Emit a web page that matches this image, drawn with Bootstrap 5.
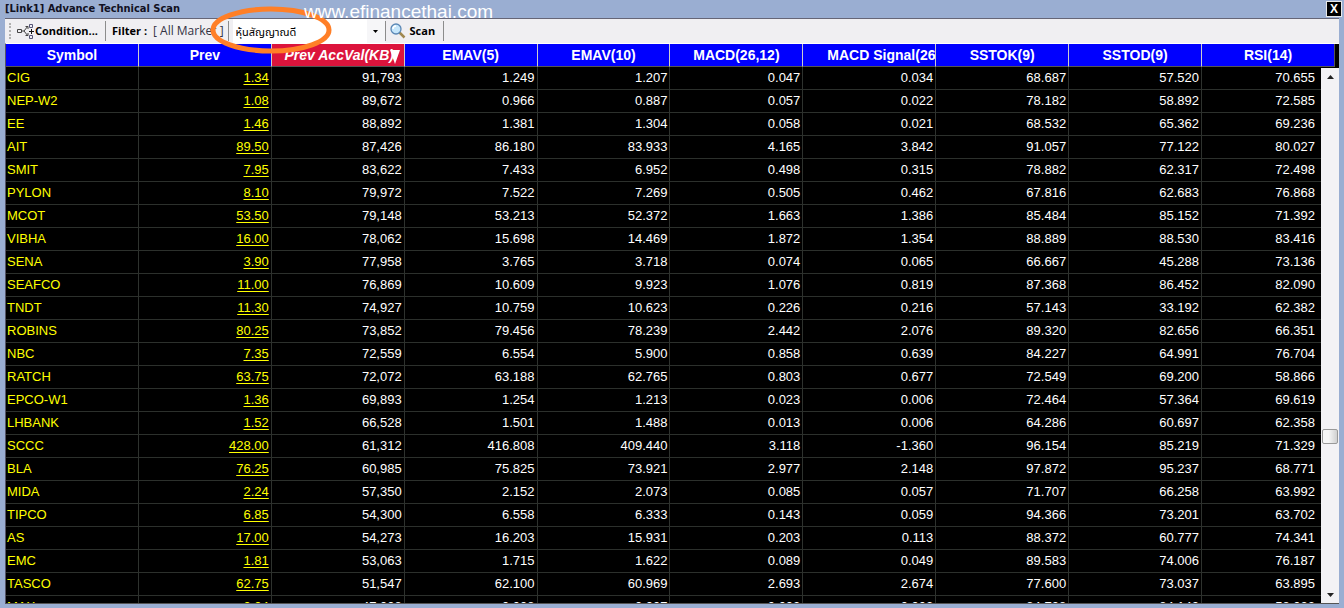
<!DOCTYPE html>
<html lang="en">
<head>
<meta charset="utf-8">
<meta name="viewport" content="width=device-width, initial-scale=1">
<title>Advance Technical Scan</title>
<link href="https://cdn.jsdelivr.net/npm/bootstrap@5.3.0/dist/css/bootstrap.min.css" rel="stylesheet">
<style>
:root { --frame: #9aaed2; --ui: "Open Sans", "Noto Sans", sans-serif; }
body { background: var(--frame); }
.win { padding: 1px 5px 4px; overflow: hidden; }
.titlebar { height: 17px; font: bold 11px/16px "DejaVu Sans Condensed", "DejaVu Sans", sans-serif; color: #112; }
.close-btn { width: 16px; height: 16px; padding: 0; border: 1px solid #e8e8e8; background: #000; color: #fff; font: bold 12px/13px "Liberation Sans", sans-serif; margin-right: -3px; }
.toolbar { height: 25px; background: #f0eff2; border-top: 1px solid #667; font: bold 11px/16px var(--ui); color: #000; }
.toolbar button { border: 0; background: none; padding: 0; font: inherit; color: inherit; }
.grip { width: 2px; height: 16px; border-left: 2px dotted #b0b0b0; margin: 0 6px 0 4px; }
.vsep { width: 1px; height: 20px; background: #8c8c8c; }
.market { font: 12px/16px var(--ui); color: #334; }
.filter-group { gap: 6px; padding: 0 4px 0 6px; }
.cond-btn { width: 81px; margin-right: 7px; }
.preset-box { width: 152px; }
.preset { width: 100%; height: 24px; border: 0; border-radius: 0; padding: 4px 3px 0; background: #fff; color: #000; appearance: none; font: 11px/16px "Noto Sans Thai", "Noto Sans", sans-serif; }
.preset-arrow { top: 0; right: 0; width: 18px; height: 100%; background: #f6f6f8; pointer-events: none; }
.grid-area { background: #000; overflow: hidden; border-bottom: 1px solid #555; border-left: 1px solid #556; border-top: 1px solid #fff; padding-right: 4px; }
.scan { table-layout: fixed; width: 100%; border-collapse: separate; border-spacing: 0; color: #fff; font: 13px/16px "Liberation Sans", sans-serif; }
.scan th { background: #00f; height: 23px; padding: 0 0 1px; font-size: 14px; text-align: center; overflow: hidden; white-space: nowrap; border-right: 1px solid #ccc; border-bottom: 1px solid #555; }
.scan th:last-child { border-right-color: #555; }
.scan th.clipped { text-align: left; padding-left: 24px; }
.scan th.sorted { background: #dc143c; font-style: italic; padding-left: 3px; }
.sort-mark { width: 10px; height: 14px; right: 4px; bottom: 2px; }
.scan td { height: 23px; padding: 3px 2px 3px 1px; text-align: right; border-right: 1px solid #2e322e; border-bottom: 1px solid #2c302c; }
.scan td:first-child { text-align: left; color: #ff0; }
.scan td:last-child { padding-right: 20px; border-right: 0; }
.scan a { color: #ff0; text-decoration: underline; text-underline-offset: 2px; }
.scroll-rail { top: 24px; right: 0; bottom: 0; width: 18px; background: #f3f2f5; }
.rail-btn { width: 18px; height: 17px; padding: 0; border: 0; background: none; }
.scroll-thumb { top: 361px; left: 1px; width: 16px; height: 15px; border: 1px solid #999; border-radius: 2px; background: linear-gradient(90deg, #f6f6f6 40%, #d0d0d0); }
.mark-ring { left: 208px; top: 4px; }
.site-name { left: 304px; top: 1px; font: 19px/22px "Liberation Sans", sans-serif; color: #fff; }
</style>
</head>
<body>
<main class="win vh-100 d-flex flex-column position-relative">
  <header class="titlebar d-flex justify-content-between flex-shrink-0">
    <span>[Link1] Advance Technical Scan</span>
    <button class="close-btn" aria-label="Close">X</button>
  </header>
  <div class="toolbar d-flex align-items-center flex-shrink-0">
    <span class="grip"></span>
    <button class="cond-btn d-flex align-items-center">
      <svg class="flex-shrink-0" width="18" height="16" viewBox="0 0 18 16" fill="none" stroke="#444" aria-hidden="true"><path d="M0.500 6.500h4v3h-4zM5 8h2l4-5M7 8l4 5M8.500 3.500h2.500v2.500M8.500 12.500h2.500v-2.500"/><path stroke="#557" d="M12.500 1.500h3v3h-3zM12.500 12.500h3v3h-3z"/><path stroke="#111" d="M14.500 6v5M12 8.500h5"/></svg>
      <span>Condition...</span>
    </button>
    <span class="vsep"></span>
    <div class="filter-group d-flex"><span>Filter :</span><span class="market">[ All Market ]</span></div>
    <span class="vsep me-1"></span>
    <div class="preset-box position-relative">
      <select class="preset d-block" aria-label="Saved condition"><option>หุ้นสัญญาณดี</option></select>
      <div class="preset-arrow position-absolute d-flex align-items-center justify-content-center"><svg width="5" height="3" aria-hidden="true"><path d="M0 0h5L2.500 3z"/></svg></div>
    </div>
    <span class="vsep me-1"></span>
    <button class="d-flex align-items-center gap-1 me-2"><svg width="16" height="16" viewBox="0 0 16 16" aria-hidden="true"><path d="M9.500 9.500l5 5" stroke="#a08850" stroke-width="2.500"/><circle cx="6" cy="6" r="5" fill="#c6e6fb" stroke="#5b87b5" stroke-width="1.300"/><path d="M3 6a3 3 0 0 1 3-3" fill="none" stroke="#fff" stroke-width="1.500"/></svg><span>Scan</span></button>
    <span class="vsep"></span>
  </div>
  <section class="grid-area position-relative flex-fill">
    <table class="scan">
      <thead><tr><th>Symbol</th><th>Prev</th><th class="sorted position-relative">Prev AccVal(KB)<svg class="sort-mark position-absolute" viewBox="0 0 10 14" aria-hidden="true"><path d="M0 0h10L5 14z" fill="#fff"/></svg></th><th>EMAV(5)</th><th>EMAV(10)</th><th>MACD(26,12)</th><th class="clipped">MACD Signal(26</th><th>SSTOK(9)</th><th>SSTOD(9)</th><th>RSI(14)</th></tr></thead>
      <tbody id="rows"></tbody>
    </table>
    <div class="scroll-rail position-absolute d-flex flex-column justify-content-between">
      <button class="rail-btn d-flex align-items-center justify-content-center" aria-label="Scroll up"><svg width="7" height="4"><path d="M0 4h7L3.500 0z" fill="#222"/></svg></button>
      <div class="scroll-thumb position-absolute"></div>
      <button class="rail-btn d-flex align-items-center justify-content-center" aria-label="Scroll down"><svg width="7" height="4"><path d="M0 0h7L3.500 4z" fill="#222"/></svg></button>
    </div>
  </section>
  <svg class="mark-ring position-absolute" width="126" height="52" aria-hidden="true"><ellipse cx="63" cy="26" rx="58" ry="21" fill="none" stroke="#ff7f27" stroke-width="5"/></svg>
  <div class="site-name position-absolute">www.efinancethai.com</div>
</main>
<script src="https://cdn.jsdelivr.net/npm/bootstrap@5.3.0/dist/js/bootstrap.bundle.min.js"></script>
<script>
const data = `CIG 1.34 91,793 1.249 1.207 0.047 0.034 68.687 57.520 70.655
NEP-W2 1.08 89,672 0.966 0.887 0.057 0.022 78.182 58.892 72.585
EE 1.46 88,892 1.381 1.304 0.058 0.021 68.532 65.362 69.236
AIT 89.50 87,426 86.180 83.933 4.165 3.842 91.057 77.122 80.027
SMIT 7.95 83,622 7.433 6.952 0.498 0.315 78.882 62.317 72.498
PYLON 8.10 79,972 7.522 7.269 0.505 0.462 67.816 62.683 76.868
MCOT 53.50 79,148 53.213 52.372 1.663 1.386 85.484 85.152 71.392
VIBHA 16.00 78,062 15.698 14.469 1.872 1.354 88.889 88.530 83.416
SENA 3.90 77,958 3.765 3.718 0.074 0.065 66.667 45.288 73.136
SEAFCO 11.00 76,869 10.609 9.923 1.076 0.819 87.368 86.452 82.090
TNDT 11.30 74,927 10.759 10.623 0.226 0.216 57.143 33.192 62.382
ROBINS 80.25 73,852 79.456 78.239 2.442 2.076 89.320 82.656 66.351
NBC 7.35 72,559 6.554 5.900 0.858 0.639 84.227 64.991 76.704
RATCH 63.75 72,072 63.188 62.765 0.803 0.677 72.549 69.200 58.866
EPCO-W1 1.36 69,893 1.254 1.213 0.023 0.006 72.464 57.364 69.619
LHBANK 1.52 66,528 1.501 1.488 0.013 0.006 64.286 60.697 62.358
SCCC 428.00 61,312 416.808 409.440 3.118 -1.360 96.154 85.219 71.329
BLA 76.25 60,985 75.825 73.921 2.977 2.148 97.872 95.237 68.771
MIDA 2.24 57,350 2.152 2.073 0.085 0.057 71.707 66.258 63.992
TIPCO 6.85 54,300 6.558 6.333 0.143 0.059 94.366 73.201 63.702
AS 17.00 54,273 16.203 15.931 0.203 0.113 88.372 60.777 74.341
EMC 1.81 53,063 1.715 1.622 0.089 0.049 89.583 74.006 76.187
TASCO 62.75 51,547 62.100 60.969 2.693 2.674 77.600 73.037 63.895
MAX 0.04 47,008 0.008 0.007 0.002 0.002 84.738 84.142 58.022`;
document.getElementById('rows').innerHTML = data.split('\n').map(line => '<tr>' + line.split(' ').map((v, i) => '<td>' + (i === 1 ? `<a href="#">${v}</a>` : v) + '</td>').join('') + '</tr>').join('');
</script>
</body>
</html>
